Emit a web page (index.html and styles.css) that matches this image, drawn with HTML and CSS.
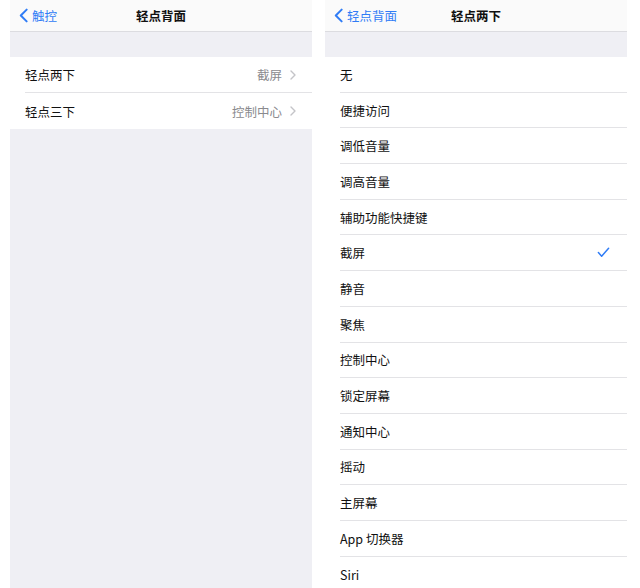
FILE: index.html
```html
<!DOCTYPE html>
<html lang="zh-CN">
<head>
  <meta charset="UTF-8" />
  <title>轻点背面</title>
  <link rel="stylesheet" href="styles.css">
</head>
<body>
  <div class="screens">
    <!-- 左侧：轻点背面 -->
    <div class="screen">
      <div class="navbar">
        <div class="back">
          <svg class="back-icon" viewBox="0 0 10 16"><path d="M8.5 1.5 L2 8 L8.5 14.5" /></svg>
          <span>触控</span>
        </div>
        <div class="title">轻点背面</div>
      </div>
      <div class="group">
        <div class="row">
          <span class="label">轻点两下</span>
          <span class="value">截屏</span>
          <svg class="chevron" viewBox="0 0 6 10"><path d="M1 1 L5 5 L1 9" /></svg>
        </div>
        <div class="row">
          <span class="label">轻点三下</span>
          <span class="value">控制中心</span>
          <svg class="chevron" viewBox="0 0 6 10"><path d="M1 1 L5 5 L1 9" /></svg>
        </div>
      </div>
    </div>

    <!-- 右侧：轻点两下 -->
    <div class="screen">
      <div class="navbar">
        <div class="back">
          <svg class="back-icon" viewBox="0 0 10 16"><path d="M8.5 1.5 L2 8 L8.5 14.5" /></svg>
          <span>轻点背面</span>
        </div>
        <div class="title">轻点两下</div>
      </div>
      <div class="group list">
        <div class="row"><span class="label">无</span></div>
        <div class="row"><span class="label">便捷访问</span></div>
        <div class="row"><span class="label">调低音量</span></div>
        <div class="row"><span class="label">调高音量</span></div>
        <div class="row"><span class="label">辅助功能快捷键</span></div>
        <div class="row">
          <span class="label">截屏</span>
          <svg class="check" viewBox="0 0 14 11"><path d="M1.5 5.5 L5 9.5 L12.5 1" /></svg>
        </div>
        <div class="row"><span class="label">静音</span></div>
        <div class="row"><span class="label">聚焦</span></div>
        <div class="row"><span class="label">控制中心</span></div>
        <div class="row"><span class="label">锁定屏幕</span></div>
        <div class="row"><span class="label">通知中心</span></div>
        <div class="row"><span class="label">摇动</span></div>
        <div class="row"><span class="label">主屏幕</span></div>
        <div class="row"><span class="label">App 切换器</span></div>
        <div class="row"><span class="label">Siri</span></div>
      </div>
    </div>
  </div>
</body>
</html>
```

FILE: styles.css
```css
body {
  margin: 0;
  background: #fff;
  font-family: "Noto Sans CJK SC", "Noto Sans", sans-serif;
  color: #111;
  overflow: hidden;
}
.screens {
  display: flex;
  gap: 13px;
  padding-left: 10px;
  height: 588px;
}
.screen {
  width: 302px;
  background: #efeff4;
  display: flex;
  flex-direction: column;
  overflow: hidden;
}
.navbar {
  flex-shrink: 0;
  height: 31px;
  background: #fafafa;
  border-bottom: 1px solid #dcdce0;
  position: relative;
  display: flex;
  align-items: center;
  justify-content: center;
}
.title {
  font-size: 12.5px;
  font-weight: 700;
  color: #111;
}
.back {
  position: absolute;
  left: 9px;
  top: 0;
  height: 31px;
  display: flex;
  align-items: center;
  gap: 4px;
  color: #2f7cf6;
  font-size: 12.5px;
}
.back-icon {
  width: 9px;
  height: 15px;
  fill: none;
  stroke: #2f7cf6;
  stroke-width: 2.2;
  stroke-linecap: round;
  stroke-linejoin: round;
}
.group {
  flex-shrink: 0;
  margin-top: 25px;
  background: #fff;
}
.row {
  flex-shrink: 0;
  height: 36px;
  margin-left: 15px;
  padding-right: 16px;
  display: flex;
  align-items: center;
  font-size: 12.5px;
  border-bottom: 1px solid #e3e3e6;
  box-sizing: border-box;
}
.row:last-child {
  border-bottom: none;
}
.list .row {
  height: 35.7px;
}
.label {
  flex: 1;
}
.value {
  color: #8a8a8e;
  margin-right: 8px;
}
.chevron {
  width: 6px;
  height: 10px;
  fill: none;
  stroke: #c4c4c8;
  stroke-width: 1.4;
  stroke-linecap: round;
  stroke-linejoin: round;
}
.check {
  width: 13px;
  height: 11px;
  margin-right: 1px;
  fill: none;
  stroke: #2f7cf6;
  stroke-width: 1.6;
  stroke-linecap: round;
  stroke-linejoin: round;
}
```
